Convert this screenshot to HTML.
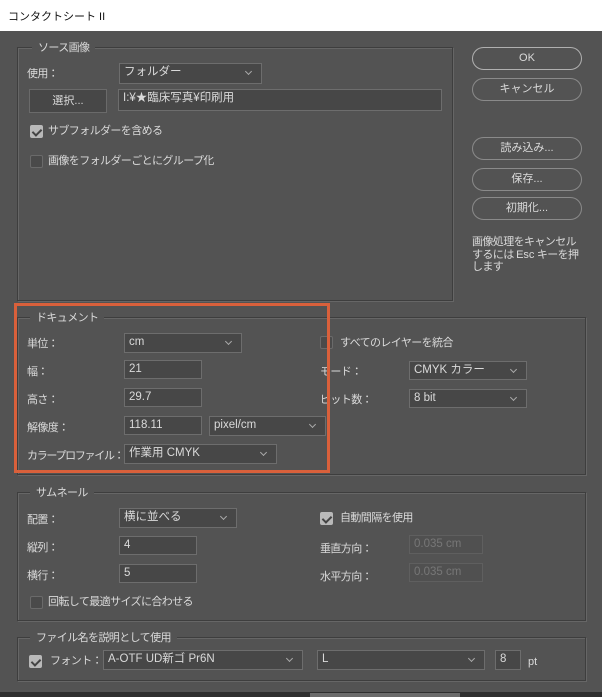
<!DOCTYPE html><html><head><meta charset="utf-8"><style>
*{box-sizing:border-box;margin:0;padding:0}
body{width:602px;height:697px;background:#535353;position:relative;overflow:hidden;font-family:"Liberation Sans","Noto Sans CJK JP",sans-serif;font-size:11px;color:#dadada;letter-spacing:-0.6px}
.a{position:absolute}
.t{position:absolute;line-height:14px;white-space:nowrap}
.fr{position:absolute;border:1px solid #3e3e3e;box-shadow:1px 1px 0 #666 inset,1px 1px 0 #666}
.lg{position:absolute;background:#535353;padding:0 6px;line-height:14px}
.in{position:absolute;background:#474747;border:1px solid #6d6d6d;padding-left:4px;line-height:17px;white-space:nowrap;letter-spacing:0;font-size:11.5px}
.sel::after{content:"";position:absolute;right:10px;top:5px;width:4px;height:4px;border-right:1px solid #aaa;border-bottom:1px solid #aaa;transform:rotate(45deg)}
.cb{position:absolute;width:13px;height:13px;background:#4a4a4a;border:1px solid #6a6a6a;border-radius:2px}
.cb.on{background:#b9b9b9;border-color:#b9b9b9}
.cb.on::after{content:"";position:absolute;left:3px;top:1px;width:4px;height:7px;border-right:2px solid #444;border-bottom:2px solid #444;transform:rotate(45deg)}
.bt{position:absolute;left:472px;width:110px;height:23px;border:1.5px solid #8a8a8a;border-radius:12px;text-align:center;line-height:20px;letter-spacing:0}
.dis{color:#777}
.l{letter-spacing:0}
</style></head><body>
<div class="a" style="left:0;top:0;width:602px;height:31px;background:#fff"></div>
<div class="t l" style="left:8px;top:10px;color:#111">コンタクトシート II</div>

<div class="fr" style="left:17px;top:47px;width:436px;height:254px"></div>
<div class="lg" style="left:32px;top:41px">ソース画像</div>
<div class="t" style="left:27px;top:67px">使用：</div>
<div class="in sel" style="left:119px;top:63px;width:143px;height:21px">フォルダー</div>
<div class="a" style="left:29px;top:89px;width:78px;height:24px;background:#474747;border:1px solid #6a6a6a;text-align:center;line-height:22px;letter-spacing:0">選択...</div>
<div class="in" style="left:118px;top:89px;width:324px;height:22px">I:¥★臨床写真¥印刷用</div>
<div class="cb on" style="left:30px;top:125px"></div>
<div class="t" style="left:48px;top:124px">サブフォルダーを含める</div>
<div class="cb" style="left:30px;top:155px"></div>
<div class="t" style="left:48px;top:154px">画像をフォルダーごとにグループ化</div>

<div class="bt" style="top:47px;border-color:#b0b0b0">OK</div>
<div class="bt" style="top:78px">キャンセル</div>
<div class="bt" style="top:137px">読み込み...</div>
<div class="bt" style="top:168px">保存...</div>
<div class="bt" style="top:197px">初期化...</div>
<div class="t" style="left:472px;top:236px;line-height:12.5px">画像処理をキャンセル<br>するには <span class="l">Esc</span> キーを押<br>します</div>

<div class="fr" style="left:17px;top:317px;width:569px;height:158px"></div>
<div class="lg" style="left:30px;top:311px">ドキュメント</div>
<div class="t" style="left:27px;top:337px">単位：</div>
<div class="in sel" style="left:124px;top:333px;width:118px;height:20px">cm</div>
<div class="t" style="left:27px;top:365px">幅：</div>
<div class="in" style="left:124px;top:360px;width:78px;height:19px">21</div>
<div class="t" style="left:27px;top:393px">高さ：</div>
<div class="in" style="left:124px;top:388px;width:78px;height:19px">29.7</div>
<div class="t" style="left:27px;top:421px">解像度：</div>
<div class="in" style="left:124px;top:416px;width:78px;height:19px">118.11</div>
<div class="in sel" style="left:209px;top:416px;width:117px;height:20px">pixel/cm</div>
<div class="t" style="left:27px;top:449px;letter-spacing:-1.3px">カラープロファイル：</div>
<div class="in sel" style="left:124px;top:444px;width:153px;height:20px">作業用 CMYK</div>
<div class="cb" style="left:320px;top:336px"></div>
<div class="t" style="left:340px;top:336px">すべてのレイヤーを統合</div>
<div class="t" style="left:320px;top:365px">モード：</div>
<div class="in sel" style="left:409px;top:361px;width:118px;height:19px">CMYK カラー</div>
<div class="t" style="left:320px;top:393px">ビット数：</div>
<div class="in sel" style="left:409px;top:389px;width:118px;height:19px">8 bit</div>
<div class="a" style="left:14px;top:303px;width:316px;height:170px;border:3px solid #d9603b"></div>

<div class="fr" style="left:17px;top:492px;width:569px;height:129px"></div>
<div class="lg" style="left:30px;top:486px">サムネール</div>
<div class="t" style="left:27px;top:513px">配置：</div>
<div class="in sel" style="left:119px;top:508px;width:118px;height:20px">横に並べる</div>
<div class="t" style="left:27px;top:541px">縦列：</div>
<div class="in" style="left:119px;top:536px;width:78px;height:19px">4</div>
<div class="t" style="left:27px;top:569px">横行：</div>
<div class="in" style="left:119px;top:564px;width:78px;height:19px">5</div>
<div class="cb on" style="left:320px;top:512px"></div>
<div class="t" style="left:340px;top:511px">自動間隔を使用</div>
<div class="t" style="left:320px;top:542px">垂直方向：</div>
<div class="in dis" style="left:409px;top:535px;width:74px;height:19px;border-color:#5f5f5f;background:#505050">0.035 cm</div>
<div class="t" style="left:320px;top:570px">水平方向：</div>
<div class="in dis" style="left:409px;top:563px;width:74px;height:19px;border-color:#5f5f5f;background:#505050">0.035 cm</div>
<div class="cb" style="left:30px;top:596px"></div>
<div class="t" style="left:48px;top:595px">回転して最適サイズに合わせる</div>

<div class="fr" style="left:17px;top:637px;width:569px;height:44px"></div>
<div class="lg" style="left:30px;top:631px">ファイル名を説明として使用</div>
<div class="cb on" style="left:29px;top:655px"></div>
<div class="t" style="left:50px;top:654px">フォント：</div>
<div class="in sel" style="left:103px;top:650px;width:200px;height:20px">A-OTF UD新ゴ Pr6N</div>
<div class="in sel" style="left:317px;top:650px;width:168px;height:20px">L</div>
<div class="in" style="left:495px;top:650px;width:26px;height:20px">8</div>
<div class="t l" style="left:528px;top:655px">pt</div>
<div class="a" style="left:0;top:692px;width:602px;height:5px;background:#2e2e2e"></div>
<div class="a" style="left:310px;top:693px;width:150px;height:4px;background:#6a6a6a"></div>
</body></html>
